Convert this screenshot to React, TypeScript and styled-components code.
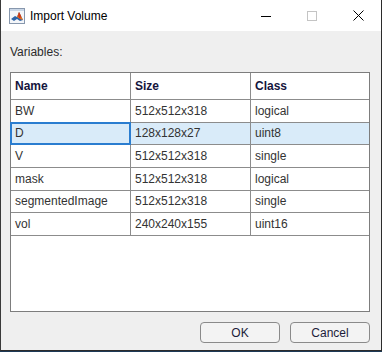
import React from "react";
import styled, { createGlobalStyle } from "styled-components";

const Global = createGlobalStyle`
  html, body { margin: 0; padding: 0; background: #1d3a57; }
  body { font-family: "Liberation Sans", Arial, sans-serif; }
  * { box-sizing: border-box; }
`;

const Window = styled.div`
  width: 382px;
  height: 351px;
  display: flex;
  flex-direction: column;
  border-left: 1px solid #3a3a3a;
  border-right: 1px solid #2b2b2b;
  border-bottom: 1px solid #2b2b2b;
  background: #efefef;
`;

const TitleBar = styled.div`
  height: 31px;
  flex: none;
  display: flex;
  align-items: center;
  background: #ffffff;
`;

const AppIcon = styled.div`
  width: 16px;
  height: 16px;
  margin-left: 8px;
  margin-right: 5px;
  margin-top: 0px;
  display: flex;
`;

const Title = styled.div`
  flex: 1;
  font-size: 12px;
  color: #000;
  padding-top: 1px;
`;

const CaptionButton = styled.div`
  width: 46px;
  height: 31px;
  display: flex;
  align-items: center;
  justify-content: center;
`;

const Body = styled.div`
  flex: 1;
  display: flex;
  flex-direction: column;
  padding: 14px 11px 7px 9px;
`;

const Label = styled.div`
  font-size: 12px;
  line-height: 14px;
  color: #2b2b2b;
`;

const Table = styled.div`
  margin-top: 13px;
  width: 360px;
  height: 240px;
  border: 1px solid #7d7d7d;
  background: #fff;
  display: flex;
  flex-direction: column;
`;

const Row = styled.div<{ $header?: boolean; $selected?: boolean }>`
  display: flex;
  height: ${(p) => (p.$header ? "27px" : "22.667px")};
  flex: none;
  border-bottom: 1px solid #8c8c8c;
  background: ${(p) => (p.$selected ? "#d9ebf9" : "transparent")};
`;

const Cell = styled.div<{ $w: number; $header?: boolean; $last?: boolean; $focus?: boolean }>`
  position: relative;
  width: ${(p) => p.$w}px;
  flex: none;
  display: flex;
  align-items: center;
  padding-left: 4px;
  font-size: 12px;
  white-space: nowrap;
  font-weight: ${(p) => (p.$header ? 700 : 400)};
  color: ${(p) => (p.$header ? "#15153d" : "#333333")};
  border-right: ${(p) => (p.$last ? "none" : "1px solid #8c8c8c")};
  ${(p) =>
    p.$focus
      ? `&::after {
    content: "";
    position: absolute;
    left: -1px;
    top: -1px;
    right: -1px;
    bottom: -1px;
    border: 2px solid #2a7dd0;
  }`
      : ""}
`;

const Buttons = styled.div`
  margin-top: 10px;
  display: flex;
  justify-content: flex-end;
  gap: 10px;
`;

const Button = styled.button`
  width: 80px;
  height: 21px;
  border: 1px solid #8a8a8a;
  border-radius: 4px;
  background: #f3f3f3;
  font-family: "Liberation Sans", Arial, sans-serif;
  font-size: 12px;
  color: #1c1c3a;
  padding: 0;
  display: flex;
  align-items: center;
  justify-content: center;
`;

const rows = [
  ["BW", "512x512x318", "logical"],
  ["D", "128x128x27", "uint8"],
  ["V", "512x512x318", "single"],
  ["mask", "512x512x318", "logical"],
  ["segmentedImage", "512x512x318", "single"],
  ["vol", "240x240x155", "uint16"],
];

const widths = [120, 120, 118];

function MatlabIcon() {
  return (
    <svg width="16" height="16" viewBox="0 0 16 16">
      <rect x="0.5" y="0.5" width="15" height="15" fill="#f4f6f9" stroke="#8797ad" />
      <rect x="1" y="1" width="14" height="2" fill="#c9d6e6" />
      <path d="M2 11 L6 8 L8 9 L10 4 L14 12 L11 13 L8 11 L5 13 Z" fill="#2d64a8" />
      <path d="M8 9 L10 4 L14 12 L11 11 Z" fill="#e8741f" />
      <path d="M10 4 L12 8 L11 11 L9 8 Z" fill="#c9361d" />
    </svg>
  );
}

export default function App() {
  return (
    <>
      <Global />
      <Window>
        <TitleBar>
          <AppIcon>
            <MatlabIcon />
          </AppIcon>
          <Title>Import Volume</Title>
          <CaptionButton>
            <svg width="10" height="10" viewBox="0 0 10 10">
              <rect x="0" y="5" width="10" height="1" fill="#000" />
            </svg>
          </CaptionButton>
          <CaptionButton>
            <svg width="10" height="10" viewBox="0 0 10 10">
              <rect x="0.5" y="0.5" width="9" height="9" fill="none" stroke="#c4c4c4" />
            </svg>
          </CaptionButton>
          <CaptionButton>
            <svg width="11" height="11" viewBox="0 0 11 11">
              <path d="M0.5 0.5 L10.5 10.5 M10.5 0.5 L0.5 10.5" stroke="#000" strokeWidth="1" />
            </svg>
          </CaptionButton>
        </TitleBar>
        <Body>
          <Label>Variables:</Label>
          <Table>
            <Row $header>
              {["Name", "Size", "Class"].map((h, i) => (
                <Cell key={h} $w={widths[i]} $header $last={i === 2}>
                  {h}
                </Cell>
              ))}
            </Row>
            {rows.map((r, ri) => (
              <Row key={r[0]} $selected={ri === 1}>
                {r.map((c, i) => (
                  <Cell key={i} $w={widths[i]} $last={i === 2} $focus={ri === 1 && i === 0}>
                    {c}
                  </Cell>
                ))}
              </Row>
            ))}
          </Table>
          <Buttons>
            <Button>OK</Button>
            <Button>Cancel</Button>
          </Buttons>
        </Body>
      </Window>
    </>
  );
}
